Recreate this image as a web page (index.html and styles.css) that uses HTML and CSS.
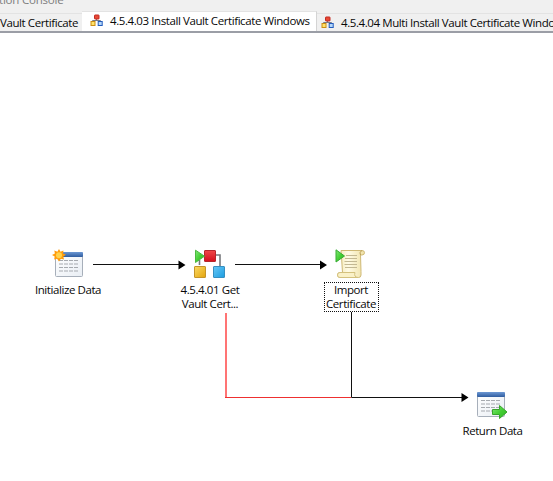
FILE: index.html
```
<!DOCTYPE html>
<html lang="en">
<head>
<meta charset="utf-8">
<title>Workflow Designer</title>
<link rel="stylesheet" href="styles.css">
</head>
<body>
<svg width="0" height="0" class="defs">
  <defs>
    <linearGradient id="green" x2="1" y2="1"><stop stop-color="#82e878"/><stop offset=".5" stop-color="#45cf35"/><stop offset="1" stop-color="#2fb522"/></linearGradient>
    <linearGradient id="red" x2="0" y2="1"><stop stop-color="#f04848"/><stop offset="1" stop-color="#d40f1c"/></linearGradient>
    <linearGradient id="gold" x2="1" y2="1"><stop stop-color="#fbd965"/><stop offset="1" stop-color="#e3a40b"/></linearGradient>
    <linearGradient id="blue" x2="1" y2="1"><stop stop-color="#68c8f6"/><stop offset="1" stop-color="#1b9ce0"/></linearGradient>
    <linearGradient id="head" x2="0" y2="1"><stop stop-color="#6c98d4"/><stop offset="1" stop-color="#2f5c9f"/></linearGradient>
    <linearGradient id="sheet" x2="1" y2="1"><stop stop-color="#ffffff"/><stop offset="1" stop-color="#e9eef4"/></linearGradient>
    <linearGradient id="paper" x2="1" y2="0"><stop stop-color="#f3e6b2"/><stop offset=".4" stop-color="#fffbe5"/><stop offset="1" stop-color="#efe0a5"/></linearGradient>
    <symbol id="tab-icon" viewBox="0 0 14 13">
      <path d="M6.5 5v2M2.500 8V6.500h8V8" fill="none" stroke="#777b86"/>
      <rect x="4.500" y="1" width="4.500" height="4" rx=".5" fill="#e84a35" stroke="#c32a22"/>
      <rect x="1" y="7.500" width="4" height="4" fill="#ffe36a" stroke="#cb8d13"/>
      <rect x="8.200" y="7.500" width="4" height="4" fill="#b5d8fb" stroke="#235cbd"/>
    </symbol>
    <symbol id="table" viewBox="0 0 28 26">
      <rect x=".5" y=".5" width="27" height="24" rx="1" fill="url(#sheet)" stroke="#a7afba"/>
      <rect x="0" y="0" width="28" height="5" rx="1" fill="url(#head)"/>
      <path d="M4 8.500h19M4 12h19M4 15.500h19M4 19h19" fill="none" stroke="#a6aaaf" stroke-width="1.200" stroke-dasharray="4 1"/>
    </symbol>
  </defs>
</svg>
<div class="window">
  <header class="title">tion Console</header>
  <nav class="tabs">
    <div class="tab tab-first"><span class="tab-text">Vault Certificate</span></div>
    <div class="tab active"><svg class="tab-icon" width="14" height="13"><use href="#tab-icon"/></svg><span class="tab-text">4.5.4.03 Install Vault Certificate Windows</span></div>
    <div class="tab tab-last"><svg class="tab-icon" width="14" height="13"><use href="#tab-icon"/></svg><span class="tab-text">4.5.4.04 Multi Install Vault Certificate Windows</span></div>
  </nav>
  <main class="canvas">
    <svg class="links" width="553" height="447" viewBox="0 34 553 447">
      <path d="M93 264.500H179M235 264.500H320M351.500 312V397.500H462" fill="none" stroke="#111"/>
      <path d="M226 313V397" fill="none" stroke="#ff7474" stroke-width="2"/>
      <rect x="225" y="397" width="126" height="1" fill="#ee3030"/>
      <path d="M178.500 260.500l7 4.500-7 4.500zM320 260.500l7 4.500-7 4.500zM461.500 393l7 4.500-7 4.500z" fill="#000"/>
    </svg>
    <div class="node start">
      <svg class="icon" width="32" height="32" viewBox="0 0 32 32">
        <use href="#table" x="3" y="4" width="28" height="26"/>
        <path d="M7 0l1.500 2.800L11.500 1.500 11 4.600 14 5.800 11.300 7.400 12 10.400 8.900 9.800 7 12.400 5.100 9.700 2.100 10.500 2.700 7.400 0 6 2.900 4.500 2.300 1.500 5.400 2.800z" transform="translate(0 1)" fill="#ff9c0c"/>
        <circle cx="7" cy="7.200" r="3" fill="#ffd24b"/>
      </svg>
      <div class="label">Initialize Data</div>
    </div>
    <div class="node sub">
      <svg class="icon" width="32" height="32" viewBox="0 0 32 32">
        <path d="M5.500 17V12M19 7h7v11" fill="none" stroke="#77797c" stroke-width="1.600"/>
        <rect x="10.500" y="2.500" width="11" height="11" rx=".5" fill="url(#red)" stroke="#b6262b"/>
        <rect x=".5" y="18.500" width="11" height="11" rx=".5" fill="url(#gold)" stroke="#c49429"/>
        <rect x="19.500" y="18.500" width="11" height="11" rx=".5" fill="url(#blue)" stroke="#358fc1"/>
        <path d="M1.500 2.200L10.500 8.200 1.500 14.500z" fill="url(#green)" stroke="#4cb842" stroke-linejoin="round"/>
      </svg>
      <div class="label">4.5.4.01 Get<br>Vault Cert...</div>
    </div>
    <div class="node import">
      <svg class="icon" width="32" height="32" viewBox="0 0 32 32">
        <path d="M6 2.500H27q2.500 0 2.500 2.200T27 7H25.500L26 23.500V27q0 2.500-2.500 2.500H5q-2.500 0-2.500-2.500T5 24.500H7.500L6.500 9z" fill="url(#paper)" stroke="#cfb975"/>
        <path d="M5 24.500H20q-1.500 4.500 3 5H5q-2.500 0-2.500-2.500T5 24.500" fill="#faf1c8" stroke="#d4c17e"/>
        <path d="M25.500 7q-1.800-3 1.500-4.500" fill="none" stroke="#b89d55"/>
        <path d="M11 7.500h11M10 10.500h12M9.500 13.500H22M9.500 16.500H22M10 19.500H22" fill="none" stroke="#c3b893" stroke-width="1.200"/>
        <path d="M1 1.800L9.500 8 1 14z" fill="url(#green)" stroke="#36ab32" stroke-linejoin="round"/>
      </svg>
      <div class="label selected">Import<br>Certificate</div>
    </div>
    <div class="node return">
      <svg class="icon" width="32" height="32" viewBox="0 0 32 32">
        <use href="#table" x="1" y="3" width="28" height="26"/>
        <path d="M16.500 20.500H23.500V16.500L31 23 23.500 29.500V25.500H16.500z" fill="url(#green)" stroke="#36a52b"/>
      </svg>
      <div class="label">Return Data</div>
    </div>
  </main>
</div>
</body>
</html>
```
FILE: styles.css
```
body {
  margin: 0;
  background: #fff;
  color: #080808;
  font: 11.5px/14px "Open Sans", "Noto Sans", sans-serif;
  overflow: hidden;
}
.defs { position: absolute; }
.window {
  width: 553px;
  height: 481px;
  overflow: hidden;
}
.title {
  height: 11px;
  background: #f0f0f0;
  color: #7d7d7d;
  line-height: 0;
  text-indent: -1px;
  overflow: hidden;
  letter-spacing: -0.2px;
}
.title::first-line { line-height: 0; }
.tabs {
  display: flex;
  align-items: flex-end;
  height: 20px;
  background: #f0f0f0;
  border-bottom: 2px solid #9b9ea6;
}
.tab {
  display: flex;
  flex: none;
  align-items: center;
  box-sizing: border-box;
  height: 18px;
  border-top: 1px solid #e3e3e3;
  white-space: nowrap;
}
.tab-first { width: 82px; }
.active {
  width: 235px;
  height: 20px;
  padding: 0 0 2px 8px;
  background: #fff;
  border-right: 1px solid #d4d4d4;
}
.tab-last { padding-left: 4px; }
.tab-icon { margin-right: 6px; }
.tab-text { letter-spacing: -0.41px; }
.canvas {
  position: relative;
  height: 448px;
}
.links { position: absolute; left: 0; top: 1px; }
.node {
  position: absolute;
  display: flex;
  flex-direction: column;
  align-items: center;
  width: 80px;
}
.start { left: 28px; top: 215px; }
.sub { left: 170px; top: 215px; }
.import { left: 311px; top: 215px; }
.return { left: 452px; top: 356px; }
.label {
  margin-top: 3px;
  text-align: center;
  white-space: nowrap;
  letter-spacing: -0.42px;
}
.return .label { padding-left: 1px; }
.selected {
  box-sizing: border-box;
  width: 55px;
  height: 30px;
  margin-top: 2px;
  border: 1px dotted #111;
}
```
